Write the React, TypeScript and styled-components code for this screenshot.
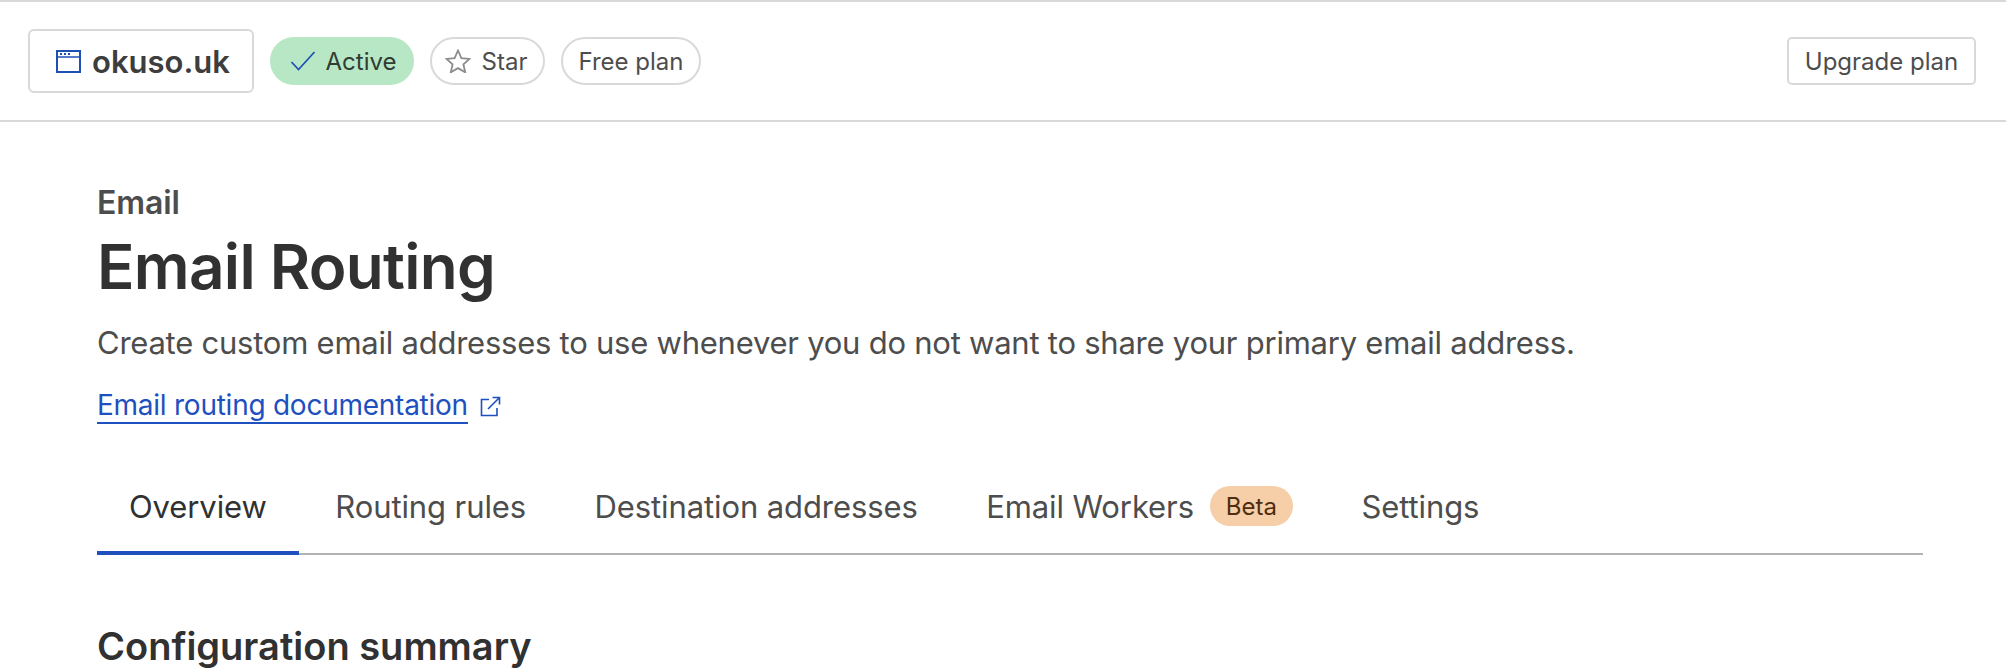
import React from "react";
import styled, { createGlobalStyle } from "styled-components";

const Global = createGlobalStyle`
  html, body { margin: 0; padding: 0; background: #fff; height: 668px; overflow: hidden; }
  body { font-family: Inter, "Liberation Sans", sans-serif; color: #4d4d4d; }
  * { box-sizing: border-box; }
`;

const Header = styled.header`
  display: flex; align-items: center; height: 122px;
  padding: 0 30px 0 28px;
  border-top: 2px solid #d9d9d9; border-bottom: 2px solid #d9d9d9;
`;
const Site = styled.div`
  display: flex; align-items: center; gap: 11px; height: 64px; width: 226px; padding-left: 26px;
  border: 2px solid #d9d9d9; border-radius: 6px;
  font-size: 31px; font-weight: 600; color: #3d3d3d;
`;
const Pills = styled.div`display: flex; align-items: center; gap: 16px; margin-left: 16px;`;
const Pill = styled.div<{ $active?: boolean; $w: number; $gap?: number; $shift?: number }>`
  display: flex; align-items: center; justify-content: center; gap: ${p => p.$gap ?? 10}px; height: 48px; width: ${p => p.$w}px;
  padding-left: ${p => Math.max(p.$shift ?? 0, 0)}px; padding-right: ${p => Math.max(-(p.$shift ?? 0), 0)}px;
  border-radius: 24px; font-size: 24px; color: ${p => (p.$active ? "#2f3d34" : "#4d4d4d")};
  background: ${p => (p.$active ? "#b7e7c4" : "#fff")};
  border: 2px solid ${p => (p.$active ? "#b7e7c4" : "#d9d9d9")};
`;
const Upgrade = styled.button`
  margin-left: auto; height: 48px; width: 189px; background: #fff; font: inherit; font-size: 24px; color: #4d4d4d;
  border: 2px solid #d9d9d9; border-radius: 5px; padding: 0;
`;
const Main = styled.main`padding: 63px 83px 0 97px;`;
const Crumb = styled.div`font-size: 32px; line-height: 36px; font-weight: 600; color: #4d4d4d; letter-spacing: -0.1px;`;
const Title = styled.h1`margin: 8px 0 0; font-size: 62px; line-height: 76px; font-weight: 600; color: #313131; letter-spacing: -0.7px;`;
const Sub = styled.p`margin: 16px 0 0; font-size: 31px; line-height: 44px; color: #4d4d4d; letter-spacing: -0.24px;`;
const LinkRow = styled.div`display: flex; align-items: center; gap: 12px; margin-top: 23px;`;
const DocLink = styled.a`font-size: 28px; line-height: 34px; color: #1e50c0; border-bottom: 2px solid #1e50c0; letter-spacing: -0.25px;`;
const Tabs = styled.nav`display: flex; gap: 4.5px; margin-top: 47px; height: 84px; border-bottom: 2px solid #b3b3b3;`;
const Tab = styled.div<{ $active?: boolean }>`
  display: flex; align-items: center; gap: 16px; padding: 0 32px 10px; height: 84px; font-size: 31px; letter-spacing: -0.1px;
  color: ${p => (p.$active ? "#313131" : "#4d4d4d")};
  border-bottom: 4px solid ${p => (p.$active ? "#1e50c0" : "transparent")};
`;
const Beta = styled.span`
  display: flex; align-items: center; justify-content: center; width: 83px; height: 40px; border-radius: 20px;
  background: #f6cfa8; color: #4f2d0e; font-size: 24px; letter-spacing: 0;
`;
const Section = styled.h2`margin: 68px 0 0; font-size: 38px; line-height: 46px; font-weight: 600; color: #313131;`;

const WindowIcon = () => (
  <svg width="25" height="23" viewBox="0 0 25 23" fill="none">
    <rect x="1" y="1" width="23" height="21" stroke="#1e4fb5" strokeWidth="2" />
    <path d="M1 7h23" stroke="#1e4fb5" strokeWidth="1.5" />
    <path d="M4 4h2M8 4h2M12 4h2" stroke="#1e4fb5" strokeWidth="2" />
  </svg>
);
const CheckIcon = () => (
  <svg width="26" height="20" viewBox="0 0 26 20" fill="none">
    <path d="M1.5 11 L8.5 18.5 L24.5 1" stroke="#1e4fb5" strokeWidth="1.7" />
  </svg>
);
const StarIcon = () => (
  <svg width="26" height="24" viewBox="0 0 26 24" fill="none">
    <path d="M13 1.5l3.4 7.6 8.1.8-6.1 5.4 1.8 8-7.2-4.2-7.2 4.2 1.8-8L1.5 9.9l8.1-.8z" stroke="#8c8c8c" strokeWidth="1.8" />
  </svg>
);
const ExternalIcon = () => (
  <svg width="21" height="21" viewBox="0 0 21 21" fill="none">
    <path d="M9 3.5H1.5V19.5H17V12" stroke="#1e50c0" strokeWidth="1.6" />
    <path d="M8 13L19.5 1.5M12.5 1.5H19.5V8.5" stroke="#1e50c0" strokeWidth="1.6" />
  </svg>
);

export default function App() {
  return (
    <>
      <Global />
      <Header>
        <Site><WindowIcon />okuso.uk</Site>
        <Pills>
          <Pill $active $w={144} $gap={10} $shift={2}><CheckIcon />Active</Pill>
          <Pill $w={115} $gap={11} $shift={-3}><StarIcon />Star</Pill>
          <Pill $w={140}>Free plan</Pill>
        </Pills>
        <Upgrade>Upgrade plan</Upgrade>
      </Header>
      <Main>
        <Crumb>Email</Crumb>
        <Title>Email Routing</Title>
        <Sub>Create custom email addresses to use whenever you do not want to share your primary email address.</Sub>
        <LinkRow>
          <DocLink>Email routing documentation</DocLink>
          <ExternalIcon />
        </LinkRow>
        <Tabs>
          <Tab $active>Overview</Tab>
          <Tab>Routing rules</Tab>
          <Tab>Destination addresses</Tab>
          <Tab>Email Workers<Beta>Beta</Beta></Tab>
          <Tab>Settings</Tab>
        </Tabs>
        <Section>Configuration summary</Section>
      </Main>
    </>
  );
}
